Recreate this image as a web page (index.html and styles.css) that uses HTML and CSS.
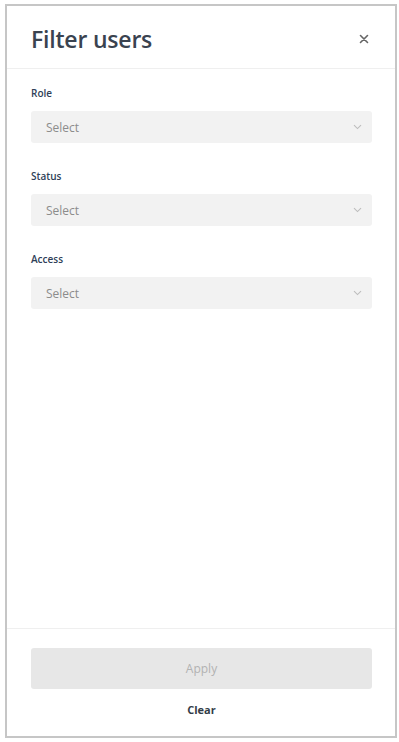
FILE: index.html
```html
<!DOCTYPE html>
<html>
<head>
  <meta name="viewport" content="width=device-width, initial-scale=1.0">
  <meta charset="UTF-8">
  <title>Filter users</title>
  <link rel="stylesheet" href="styles.css">
</head>
<body>

  <div class="panel">
    <div class="panel-head">
      <h1 class="title">Filter users</h1>
      <button class="close" aria-label="Close">
        <svg width="10" height="10" viewBox="0 0 10 10"><path d="M1.5 1.5 8.5 8.5M8.5 1.5 1.5 8.5" stroke="#666" stroke-width="1.6" stroke-linecap="round"/></svg>
      </button>
    </div>

    <div class="panel-body">
      <div class="field">
        <label>Role</label>
        <div class="select">
          <span>Select</span>
          <svg width="9" height="6" viewBox="0 0 9 6"><path d="M1 1.2 4.5 4.6 8 1.2" fill="none" stroke="#bdbdbd" stroke-width="1.1"/></svg>
        </div>
      </div>
      <div class="field">
        <label>Status</label>
        <div class="select">
          <span>Select</span>
          <svg width="9" height="6" viewBox="0 0 9 6"><path d="M1 1.2 4.5 4.6 8 1.2" fill="none" stroke="#bdbdbd" stroke-width="1.1"/></svg>
        </div>
      </div>
      <div class="field">
        <label>Access</label>
        <div class="select">
          <span>Select</span>
          <svg width="9" height="6" viewBox="0 0 9 6"><path d="M1 1.2 4.5 4.6 8 1.2" fill="none" stroke="#bdbdbd" stroke-width="1.1"/></svg>
        </div>
      </div>
    </div>

    <div class="panel-foot">
      <button class="apply" disabled>Apply</button>
      <button class="clear">Clear</button>
    </div>
  </div>

</body>
</html>
```

FILE: styles.css
```css
* {
  margin: 0;
  padding: 0;
  box-sizing: border-box;
}

body {
  background: #fff;
  font-family: "Open Sans", "Noto Sans", sans-serif;
}

.panel {
  width: 392px;
  height: 734px;
  margin: 4px 0 0 5px;
  border: 2px solid #c6c6c6;
  display: flex;
  flex-direction: column;
}

.panel-head {
  height: 63px;
  border-bottom: 1px solid #efefef;
  display: flex;
  align-items: center;
  justify-content: space-between;
  padding: 4px 24px 0 24px;
}
.title {
  font-size: 23px;
  font-weight: 600;
  color: #3a4350;
  letter-spacing: -0.2px;
}
.close {
  border: 0;
  background: none;
  width: 14px;
  height: 14px;
  display: flex;
  align-items: center;
  justify-content: center;
}

.panel-body {
  flex: 1;
  padding: 17px 23px 0 24px;
}
.field {
  margin-bottom: 26px;
}
.field label {
  display: block;
  font-size: 10px;
  line-height: 14px;
  font-weight: 600;
  color: #2f3f58;
  margin-bottom: 11px;
}
.select {
  height: 32px;
  background: #f2f2f2;
  border-radius: 3px;
  display: flex;
  align-items: center;
  justify-content: space-between;
  padding: 0 10px 0 15px;
}
.select span {
  font-size: 12px;
  color: #8c8c8c;
}

.panel-foot {
  border-top: 1px solid #efefef;
  padding: 19px 23px 0 24px;
  height: 108px;
  display: flex;
  flex-direction: column;
  align-items: center;
}
.apply {
  width: 100%;
  height: 41px;
  border: 0;
  border-radius: 3px;
  background: #e7e7e7;
  color: #b2b2b2;
  font-family: inherit;
  font-size: 12px;
}
.clear {
  border: 0;
  background: none;
  font-family: inherit;
  font-size: 11px;
  font-weight: 700;
  color: #333c47;
  margin-top: 13px;
}
```
